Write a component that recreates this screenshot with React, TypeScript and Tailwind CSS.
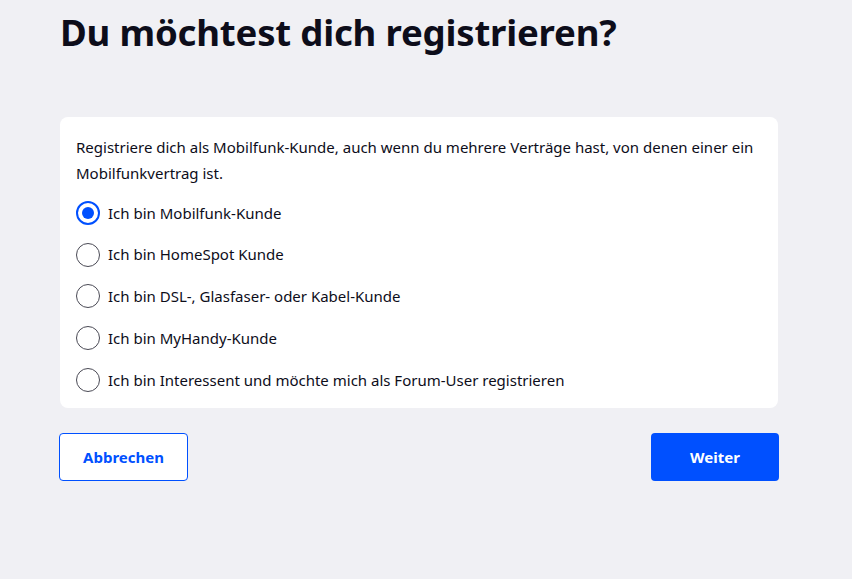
import React, { useState } from "react";

const options = [
  "Ich bin Mobilfunk-Kunde",
  "Ich bin HomeSpot Kunde",
  "Ich bin DSL-, Glasfaser- oder Kabel-Kunde",
  "Ich bin MyHandy-Kunde",
  "Ich bin Interessent und möchte mich als Forum-User registrieren",
];

export default function App() {
  const [sel, setSel] = useState(0);
  return (
    <div className="min-h-[579px] w-full bg-[#f0f0f4] text-[#0d0d1a]" style={{ fontFamily: '"Noto Sans", "Open Sans", sans-serif' }}>
      <div className="w-[720px] pl-[60px] box-content pt-[6px]">
        <h1 className="text-[36.6px] font-bold leading-[52px] tracking-[-0.2px]">Du möchtest dich registrieren?</h1>
        <div className="mt-[59px] bg-white rounded-[8px] w-[718px] px-4 pt-[17px] pb-[7px]">
          <p className="text-[15px] leading-[26px]">
            Registriere dich als Mobilfunk-Kunde, auch wenn du mehrere Verträge hast, von denen einer ein Mobilfunkvertrag ist.
          </p>
          <div className="mt-[6px] flex flex-col">
            {options.map((o, i) => (
              <label key={o} className="flex items-center gap-2 h-[41.75px] cursor-pointer" onClick={() => setSel(i)}>
                <span className={`w-6 h-6 rounded-full border flex items-center justify-center ${sel === i ? "border-[#0050ff] border-2" : "border-[#4a4a55]"}`}>
                  {sel === i && <span className="w-3 h-3 rounded-full bg-[#0050ff]" />}
                </span>
                <span className="text-[15px]">{o}</span>
              </label>
            ))}
          </div>
        </div>
        <div className="mt-[25px] flex justify-between w-[720px] -ml-px">
          <button className="w-[129px] h-[48px] rounded-[4px] border border-[#0050ff] bg-white text-[#0050ff] font-bold text-[15px]">Abbrechen</button>
          <button className="w-[128px] h-[48px] rounded-[4px] bg-[#0050ff] text-white font-bold text-[15px]">Weiter</button>
        </div>
      </div>
    </div>
  );
}
